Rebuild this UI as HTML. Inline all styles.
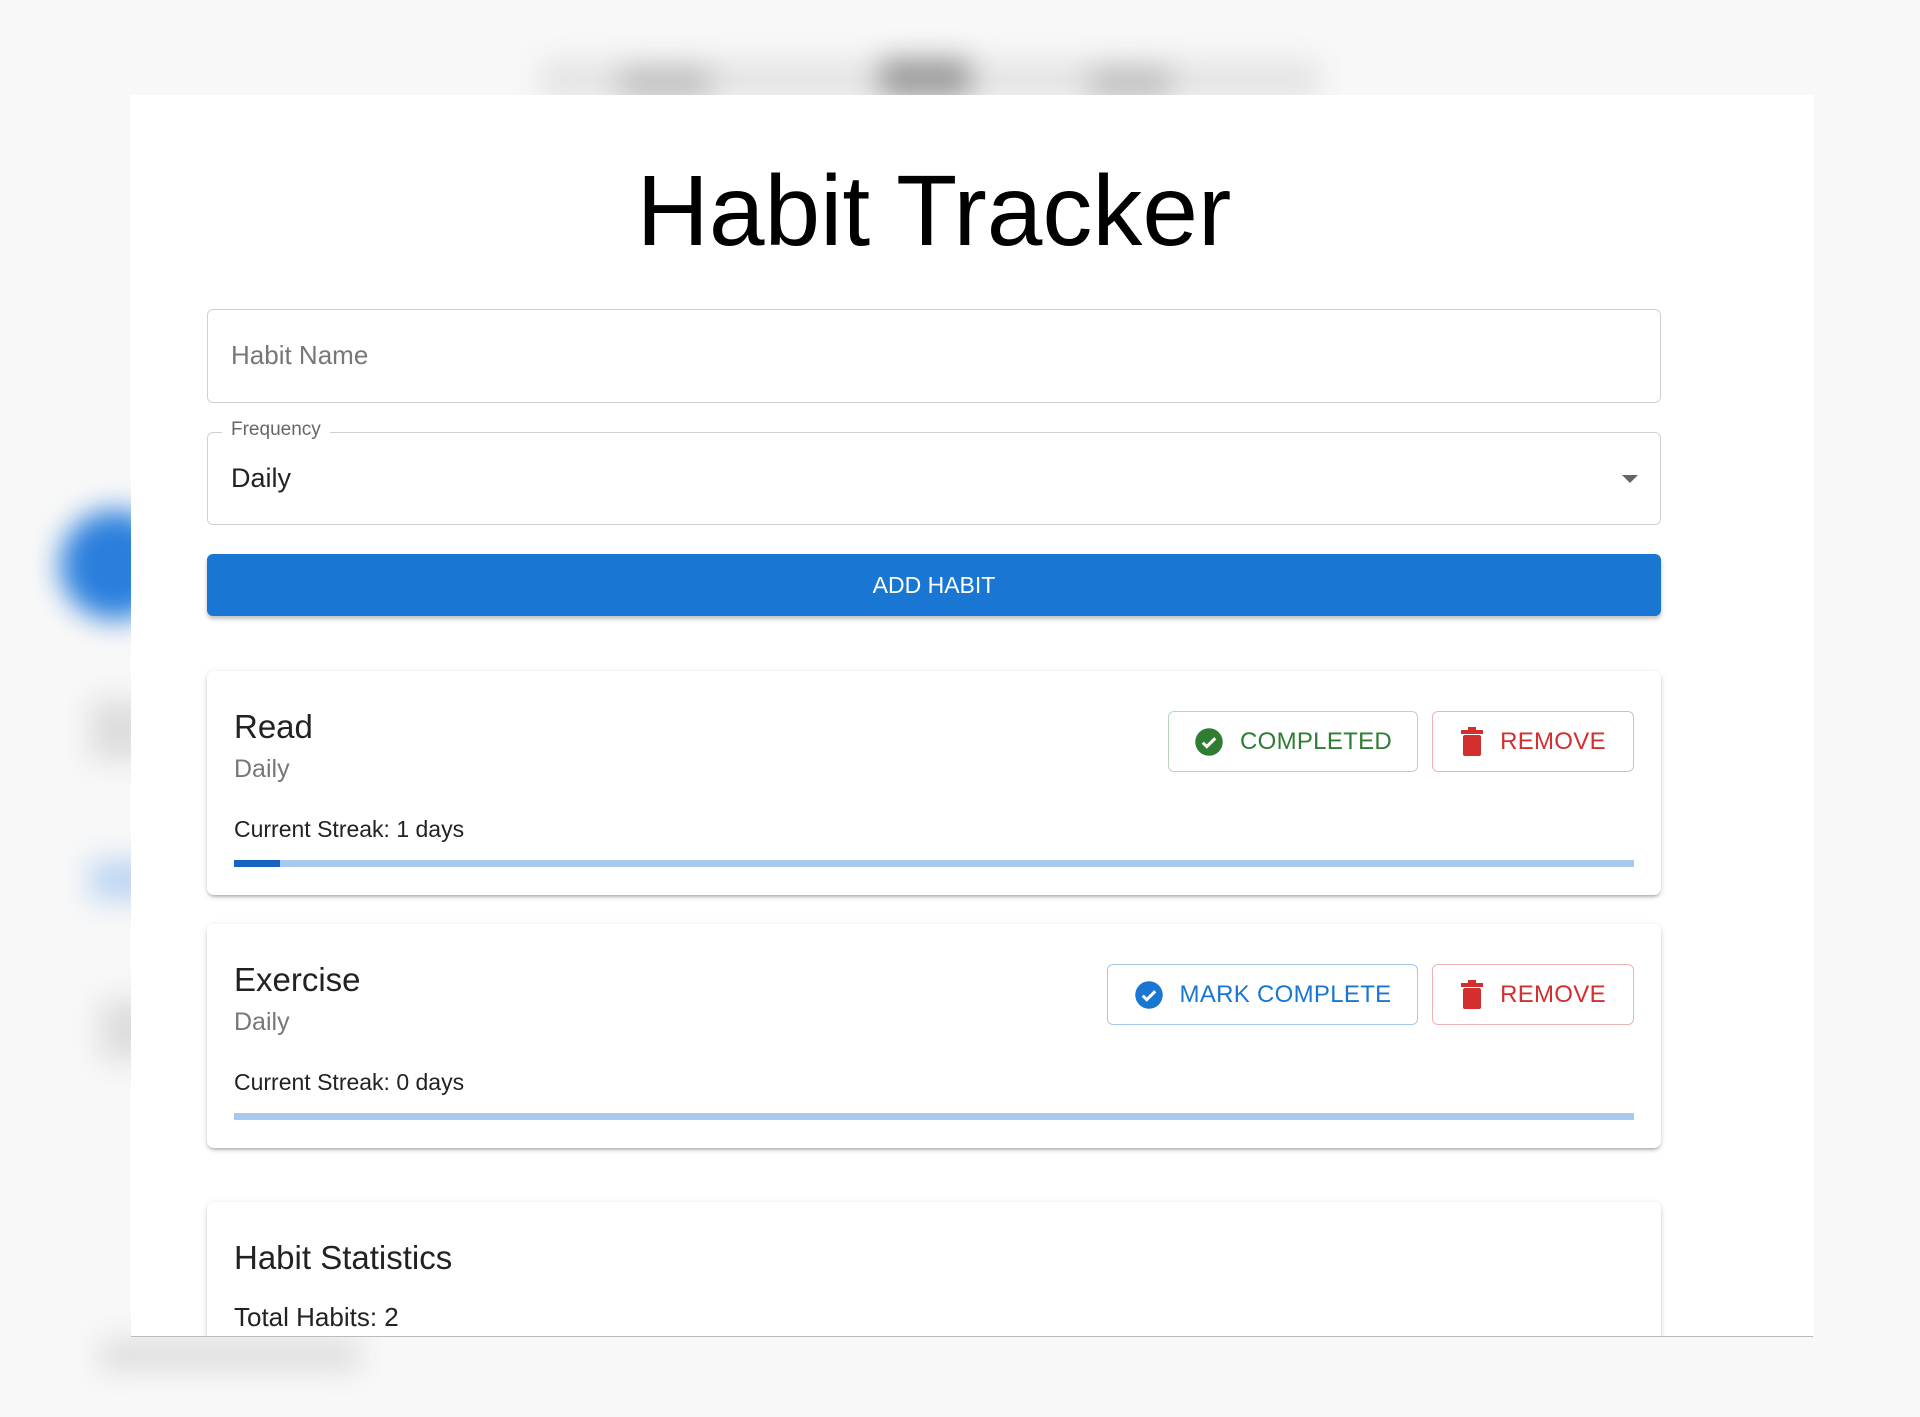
<!DOCTYPE html>
<html><head><meta charset="utf-8">
<style>
*{box-sizing:border-box;margin:0;padding:0}
body{width:1920px;height:1417px;background:#f8f8f8;font-family:"Liberation Sans",Arial,sans-serif;position:relative;overflow:hidden}
.blur{position:absolute;filter:blur(14px)}
.panel{position:absolute;left:131px;top:95px;width:1682px;height:1242px;background:#fff;border-bottom:1px solid #bbb;overflow:hidden}
h1{position:absolute;left:0;width:1606px;top:66px;text-align:center;font-weight:400;font-size:100px;color:#000;line-height:1}
.abs{position:absolute}
.field{position:absolute;left:76px;width:1454px;border:1.5px solid #d0d0d0;border-radius:6px}
.card{position:absolute;left:76px;width:1454px;background:#fff;border-radius:7px;box-shadow:0 3px 3px -2px rgba(0,0,0,.25),0 2px 4px rgba(0,0,0,.12),0 1px 8px rgba(0,0,0,.08)}
.btn{position:absolute;height:61px;border-radius:6px;font-size:24px;display:flex;align-items:center;justify-content:center;gap:16px;letter-spacing:.3px}
.g{border:1.5px solid #b8d6b8;color:#2e7d32}
.r{border:1.5px solid #eeb3b3;color:#d32f2f}
.b{border:1.5px solid #a7c8ec;color:#1976d2}
.title{position:absolute;left:27px;font-size:33px;color:#222}
.sub{position:absolute;left:27px;font-size:25px;color:#777}
.st{position:absolute;left:27px;font-size:23px;color:#222}
.bar{position:absolute;left:27px;width:1400px;height:7px;background:#a8c9ee}
</style></head><body>
<div class="blur" style="left:540px;top:60px;width:780px;height:40px;background:#e4e4e4"></div>
<div class="blur" style="left:880px;top:60px;width:90px;height:36px;background:#999"></div>
<div class="blur" style="left:620px;top:70px;width:90px;height:26px;background:#bbb"></div>
<div class="blur" style="left:1090px;top:70px;width:80px;height:26px;background:#bbb"></div>
<div class="blur" style="left:60px;top:510px;width:110px;height:110px;background:#2a7fdc;border-radius:50%"></div>
<div class="blur" style="left:90px;top:860px;width:70px;height:40px;background:#bcd5f2"></div>
<div class="blur" style="left:90px;top:700px;width:60px;height:60px;background:#ddd"></div>
<div class="blur" style="left:100px;top:1000px;width:60px;height:60px;background:#ddd"></div>
<div class="blur" style="left:100px;top:1340px;width:260px;height:30px;background:#ddd"></div>
<div class="panel">
  <h1>Habit Tracker</h1>
  <div class="field" style="top:214px;height:94px"><span class="abs" style="left:23px;top:30px;font-size:26px;color:#777">Habit Name</span></div>
  <div class="field" style="top:337px;height:93px"><span class="abs" style="left:14px;top:-14px;background:#fff;padding:0 9px;font-size:19px;color:#666">Frequency</span><span class="abs" style="left:23px;top:30px;font-size:27px;color:#222">Daily</span><span class="abs" style="right:22px;top:42px;width:0;height:0;border-left:8px solid transparent;border-right:8px solid transparent;border-top:8px solid #666"></span></div>
  <div class="abs" style="left:76px;top:459px;width:1454px;height:62px;background:#1976d2;border-radius:6px;box-shadow:0 3px 4px rgba(0,0,0,.25);color:#fff;font-size:23px;display:flex;align-items:center;justify-content:center">ADD HABIT</div>

  <div class="card" style="top:576px;height:224px">
    <div class="title" style="top:37px">Read</div>
    <div class="sub" style="top:84px">Daily</div>
    <div class="st" style="top:145px">Current Streak: 1 days</div>
    <div class="bar" style="top:189px"><div style="width:46px;height:7px;background:#1565c0"></div></div>
    <div class="btn g" style="left:961px;top:40px;width:250px"><svg width="30" height="30" viewBox="0 0 24 24"><circle cx="12" cy="12" r="11" fill="#2e7d32"/><path d="M7 12.5l3.2 3.2L17 9" stroke="#fff" stroke-width="2.4" fill="none"/></svg>COMPLETED</div>
    <div class="btn r" style="left:1225px;top:40px;width:202px"><svg width="24" height="30" viewBox="0 0 24 30"><rect x="3" y="8" width="18" height="21" rx="2" fill="#d32f2f"/><rect x="1" y="3" width="22" height="4" fill="#d32f2f"/><rect x="8" y="0" width="8" height="4" fill="#d32f2f"/></svg>REMOVE</div>
  </div>

  <div class="card" style="top:829px;height:224px">
    <div class="title" style="top:37px">Exercise</div>
    <div class="sub" style="top:84px">Daily</div>
    <div class="st" style="top:145px">Current Streak: 0 days</div>
    <div class="bar" style="top:189px"></div>
    <div class="btn b" style="left:900px;top:40px;width:311px"><svg width="30" height="30" viewBox="0 0 24 24"><circle cx="12" cy="12" r="11" fill="#1976d2"/><path d="M7 12.5l3.2 3.2L17 9" stroke="#fff" stroke-width="2.4" fill="none"/></svg>MARK COMPLETE</div>
    <div class="btn r" style="left:1225px;top:40px;width:202px"><svg width="24" height="30" viewBox="0 0 24 30"><rect x="3" y="8" width="18" height="21" rx="2" fill="#d32f2f"/><rect x="1" y="3" width="22" height="4" fill="#d32f2f"/><rect x="8" y="0" width="8" height="4" fill="#d32f2f"/></svg>REMOVE</div>
  </div>

  <div class="card" style="top:1107px;height:200px">
    <div class="title" style="top:37px">Habit Statistics</div>
    <div class="st" style="top:100px;font-size:26px">Total Habits: 2</div>
  </div>
</div>
</body></html>
